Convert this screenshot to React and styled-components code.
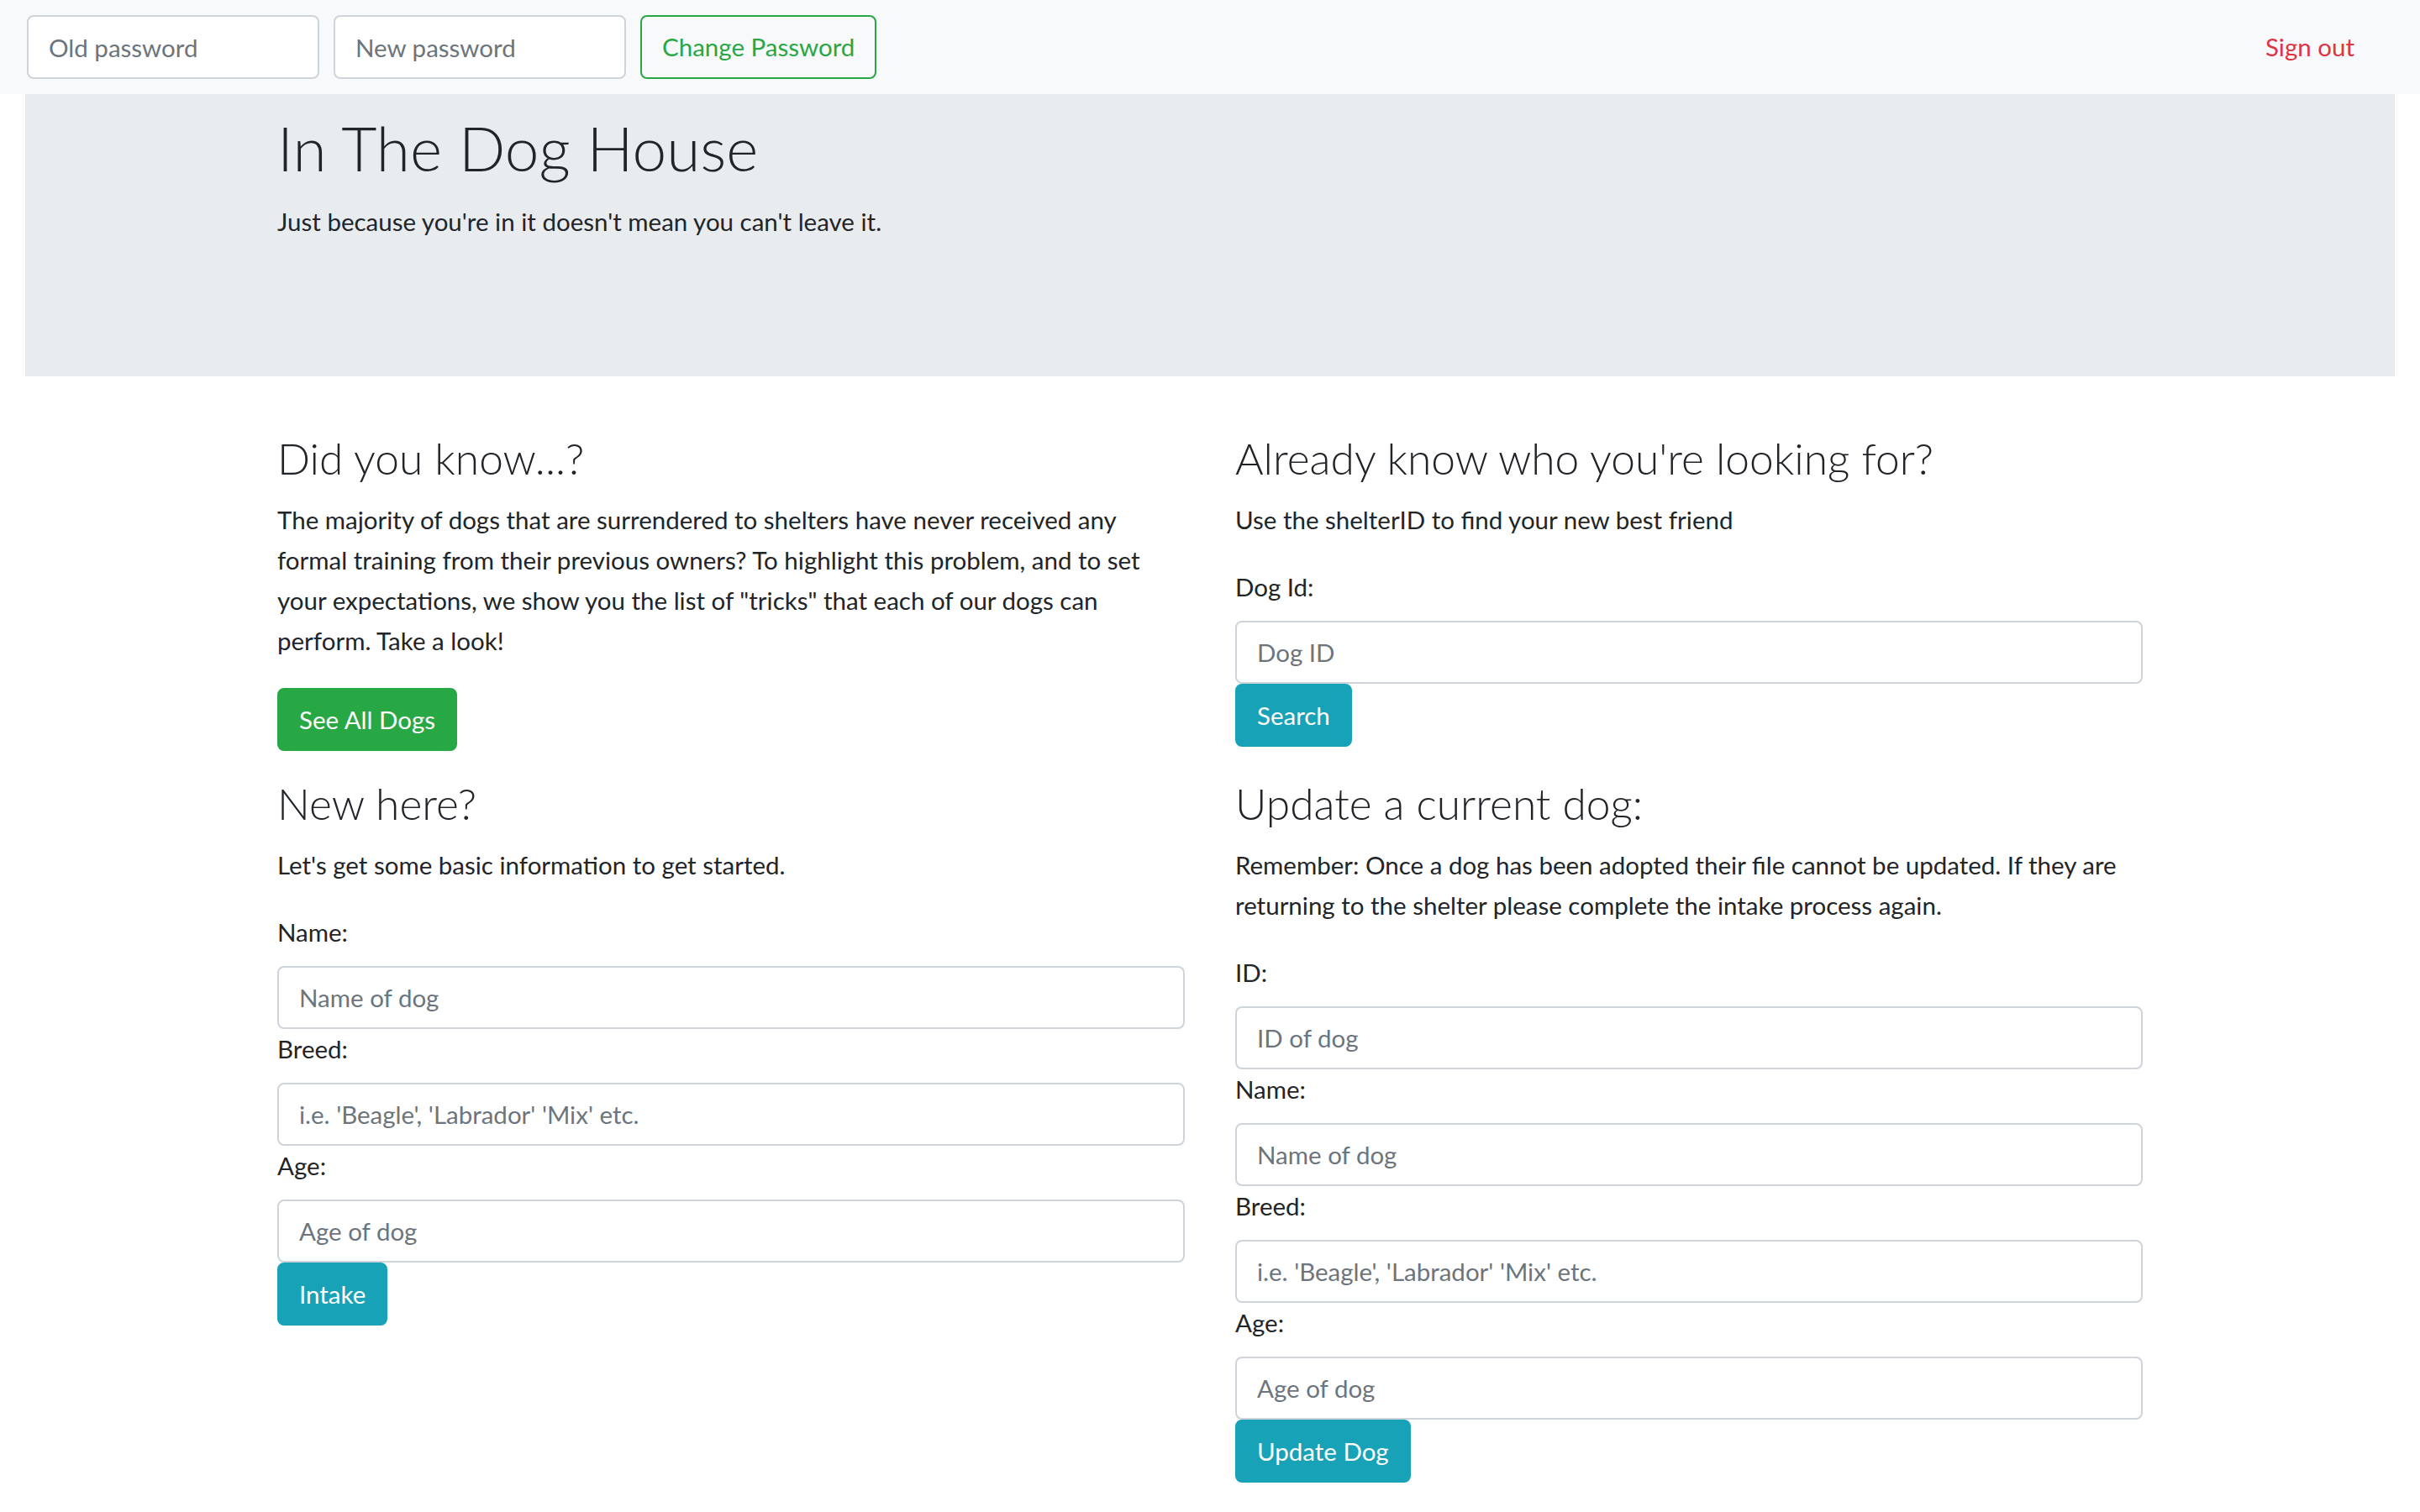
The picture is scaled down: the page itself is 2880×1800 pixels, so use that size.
import React from "react";
import styled, { createGlobalStyle } from "styled-components";

const GlobalStyle = createGlobalStyle`
  * {
    box-sizing: border-box;
  }
  body {
    margin: 0;
    background: #fff;
    color: #212529;
    font-family: Lato, "Liberation Sans", sans-serif;
    font-size: 29.5px;
    line-height: 48px;
  }
  input::placeholder {
    color: #6c757d;
    opacity: 1;
  }
`;

const Navbar = styled.nav`
  display: flex;
  align-items: center;
  justify-content: space-between;
  height: 112px;
  padding: 0 32px;
  background: #f8f9fa;
`;

const NavForm = styled.form`
  display: flex;
  gap: 17px;
`;

const NavInput = styled.input`
  width: 348px;
  height: 76px;
  padding: 12px 24px;
  border: 2px solid #ced4da;
  border-radius: 8px;
  background: #fff;
  font: inherit;
  color: #495057;
`;

const OutlineButton = styled.button`
  height: 76px;
  padding: 0 24px;
  border: 2px solid #28a745;
  border-radius: 8px;
  background: transparent;
  color: #28a745;
  font: inherit;
  cursor: pointer;
`;

const SignOut = styled.a`
  margin-right: 46px;
  color: #dc3545;
  text-decoration: none;
  cursor: pointer;
`;

const Jumbotron = styled.header`
  height: 336px;
  margin: 0 30px 64px;
  padding-top: 16px;
  background: #e9ecef;
`;

const Container = styled.div`
  width: 2280px;
  margin: 0 auto;
  padding: 0 30px;
`;

const Title = styled.h1`
  margin: 0 0 16px;
  font-size: 73px;
  line-height: 96px;
  font-weight: 300;
`;

const Lead = styled.p`
  margin: 0;
`;

const Grid = styled(Container)`
  display: grid;
  grid-template-columns: 1fr 1fr;
  column-gap: 60px;
  row-gap: 29px;
  align-items: start;
`;

const Section = styled.section`
  display: flex;
  flex-direction: column;
  align-items: flex-start;
`;

const Heading = styled.h3`
  margin: 0 0 16px;
  font-size: 51.5px;
  line-height: 67px;
  font-weight: 300;
`;

const Text = styled.p`
  margin: 0 0 32px;
`;

const Label = styled.label`
  display: block;
  margin-bottom: 16px;
`;

const Field = styled.input`
  display: block;
  width: 100%;
  height: 75px;
  padding: 12px 24px;
  border: 2px solid #ced4da;
  border-radius: 8px;
  background: #fff;
  font: inherit;
  color: #495057;
`;

const Button = styled.button`
  height: 75px;
  padding: 0 24px;
  border: 2px solid ${(p) => p.$color};
  border-radius: 8px;
  background: ${(p) => p.$color};
  color: #fff;
  font: inherit;
  cursor: pointer;
`;

const GREEN = "#28a745";
const TEAL = "#17a2b8";

const FormField = ({ label, placeholder }) => (
  <>
    <Label>{label}</Label>
    <Field placeholder={placeholder} />
  </>
);

export default function App() {
  return (
    <>
      <GlobalStyle />
      <Navbar>
        <NavForm onSubmit={(e) => e.preventDefault()}>
          <NavInput type="password" placeholder="Old password" />
          <NavInput type="password" placeholder="New password" />
          <OutlineButton type="submit">Change Password</OutlineButton>
        </NavForm>
        <SignOut>Sign out</SignOut>
      </Navbar>

      <Jumbotron>
        <Container>
          <Title>In The Dog House</Title>
          <Lead>Just because you're in it doesn't mean you can't leave it.</Lead>
        </Container>
      </Jumbotron>

      <Grid>
        <Section>
          <Heading>Did you know...?</Heading>
          <Text>
            The majority of dogs that are surrendered to shelters have never
            received any formal training from their previous owners? To
            highlight this problem, and to set your expectations, we show you
            the list of "tricks" that each of our dogs can perform. Take a look!
          </Text>
          <Button $color={GREEN}>See All Dogs</Button>
        </Section>

        <Section>
          <Heading>Already know who you're looking for?</Heading>
          <Text>Use the shelterID to find your new best friend</Text>
          <FormField label="Dog Id:" placeholder="Dog ID" />
          <Button $color={TEAL}>Search</Button>
        </Section>

        <Section>
          <Heading>New here?</Heading>
          <Text>Let's get some basic information to get started.</Text>
          <FormField label="Name:" placeholder="Name of dog" />
          <FormField label="Breed:" placeholder="i.e. 'Beagle', 'Labrador' 'Mix' etc." />
          <FormField label="Age:" placeholder="Age of dog" />
          <Button $color={TEAL}>Intake</Button>
        </Section>

        <Section>
          <Heading>Update a current dog:</Heading>
          <Text>
            Remember: Once a dog has been adopted their file cannot be updated.
            If they are returning to the shelter please complete the intake
            process again.
          </Text>
          <FormField label="ID:" placeholder="ID of dog" />
          <FormField label="Name:" placeholder="Name of dog" />
          <FormField label="Breed:" placeholder="i.e. 'Beagle', 'Labrador' 'Mix' etc." />
          <FormField label="Age:" placeholder="Age of dog" />
          <Button $color={TEAL}>Update Dog</Button>
        </Section>
      </Grid>
    </>
  );
}
